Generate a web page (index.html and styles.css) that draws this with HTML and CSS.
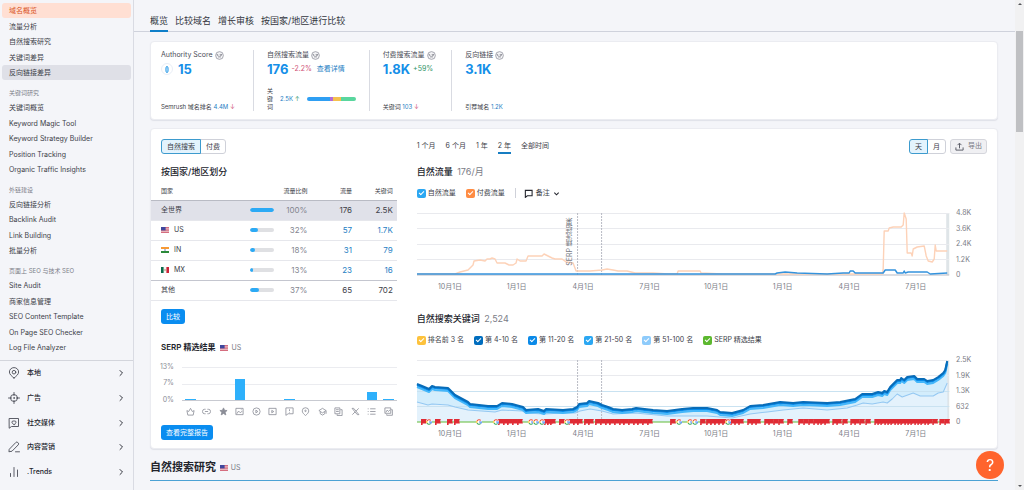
FILE: index.html
```html
<!DOCTYPE html>
<html lang="zh-CN">
<head>
<meta charset="utf-8">
<meta name="viewport" content="width=device-width, initial-scale=1">
<title>域名概览</title>
<link rel="stylesheet" href="styles.css">
</head>
<body>
<svg class="sprite" aria-hidden="true">
  <symbol id="us" viewBox="0 0 8 6"><path fill="#f3d9dc" d="M0 0h8v6H0z"/><path stroke="#c8445a" stroke-width=".8" d="M0 .4h8M0 2.1h8M0 3.8h8M0 5.6h8"/><path fill="#3f479d" d="M0 0h4.6v3.4H0z"/></symbol>
  <symbol id="in" viewBox="0 0 8 6"><path fill="#fff" d="M0 0h8v6H0z"/><path fill="#f79a35" d="M0 0h8v2H0z"/><path fill="#2c8a3a" d="M0 4h8v2H0z"/><circle cx="4" cy="3" r=".8" fill="#5a62b5"/></symbol>
  <symbol id="mx" viewBox="0 0 8 6"><path fill="#f6f6f4" d="M0 0h8v6H0z"/><path fill="#0b6b4b" d="M0 0h2.6v6H0z"/><path fill="#cc2438" d="M5.4 0H8v6H5.4z"/><circle cx="4" cy="3" r=".8" fill="#a8825a"/></symbol>
  <symbol id="info" viewBox="0 0 10 10"><circle cx="5" cy="5" r="4.300" fill="#f4f4f6" stroke="#8a8c96" stroke-width=".8"/><path fill="none" stroke="#7a7c86" stroke-width=".9" d="M2.500 3.300v1.500h1.300M5.800 3.300v1.500h1.500V3.300M3.400 6.500h3.200"/></symbol>
  <symbol id="chev" viewBox="0 0 8 8"><path fill="none" stroke="currentColor" stroke-width="1" stroke-linecap="round" stroke-linejoin="round" d="M3 1.500 5.500 4 3 6.500"/></symbol>
  <symbol id="flag" viewBox="0 0 6 6"><path fill="#e02b34" d="M0 0h5.800L5.200 2l.6 2.600H1.600V6H0z"/></symbol>
  <symbol id="goog" viewBox="0 0 6 6"><circle cx="3" cy="3" r="3" fill="#fff"/><g fill="none" stroke-width="1"><path stroke="#ea4335" d="M4.800 1.400A2.300 2.300 0 0 0 1 2"/><path stroke="#fbbc05" d="M1 2a2.300 2.300 0 0 0 0 2"/><path stroke="#34a853" d="M1 4a2.300 2.300 0 0 0 3.600.7"/><path stroke="#4285f4" d="M4.600 4.700A2.300 2.300 0 0 0 5.300 3H3"/></g></symbol>
</svg>

<div class="app">
  <nav class="sidebar" aria-label="SEO">
    <ul class="links">
      <li><a class="link link-current" href="#">域名概览</a></li>
      <li><a class="link" href="#">流量分析</a></li>
      <li><a class="link" href="#">自然搜索研究</a></li>
      <li><a class="link" href="#">关键词差异</a></li>
      <li><a class="link link-hover" href="#">反向链接差异</a></li>
    </ul>
    <h2 class="group-title">关键词研究</h2>
    <ul class="links">
      <li><a class="link" href="#">关键词概览</a></li>
      <li><a class="link" href="#">Keyword Magic Tool</a></li>
      <li><a class="link" href="#">Keyword Strategy Builder</a></li>
      <li><a class="link" href="#">Position Tracking</a></li>
      <li><a class="link" href="#">Organic Traffic Insights</a></li>
    </ul>
    <h2 class="group-title">外链建设</h2>
    <ul class="links links-four">
      <li><a class="link" href="#">反向链接分析</a></li>
      <li><a class="link" href="#">Backlink Audit</a></li>
      <li><a class="link" href="#">Link Building</a></li>
      <li><a class="link" href="#">批量分析</a></li>
    </ul>
    <h2 class="group-title">页面上 SEO 与技术 SEO</h2>
    <ul class="links">
      <li><a class="link" href="#">Site Audit</a></li>
      <li><a class="link" href="#">商家信息管理</a></li>
      <li><a class="link" href="#">SEO Content Template</a></li>
      <li><a class="link" href="#">On Page SEO Checker</a></li>
      <li><a class="link" href="#">Log File Analyzer</a></li>
    </ul>
    <ul class="sections">
      <li><a class="section-link" href="#"><svg class="section-icon" viewBox="0 0 12 12"><path d="M6 11C3.500 9 1.400 7.300 1.400 5a4.600 4.400 0 0 1 9.200 0C10.600 7.300 8.500 9 6 11z"/><circle cx="6" cy="5.200" r="1.800"/></svg><span>本地</span><svg class="chev"><use href="#chev"/></svg></a></li>
      <li><a class="section-link" href="#"><svg class="section-icon" viewBox="0 0 12 12"><circle cx="6" cy="6" r="3.500"/><circle cx="6" cy="6" r=".4"/><path d="M6 .5v3M6 8.500v3M.5 6h3M8.500 6h3"/></svg><span>广告</span><svg class="chev"><use href="#chev"/></svg></a></li>
      <li><a class="section-link" href="#"><svg class="section-icon" viewBox="0 0 12 12"><path d="M1.500 1.500h9v8h-7l-2 1.500z"/><path d="M6 7.800 4.300 6a1.200 1.200 0 0 1 1.700-1.700A1.200 1.200 0 0 1 7.700 6z"/></svg><span>社交媒体</span><svg class="chev"><use href="#chev"/></svg></a></li>
      <li><a class="section-link" href="#"><svg class="section-icon" viewBox="0 0 12 12"><path d="M1.500 8 7.800 1.500a1.400 1.400 0 0 1 2 0l.4.4a1.400 1.400 0 0 1 0 2L4 10.200l-2.700.5zM7.500 10.800h4"/></svg><span>内容营销</span><svg class="chev"><use href="#chev"/></svg></a></li>
      <li><a class="section-link" href="#"><svg class="section-icon" viewBox="0 0 12 12"><path d="M2.500 7.500v3M6 1.500v9M9.500 4v6.500"/></svg><span>.Trends</span><svg class="chev"><use href="#chev"/></svg></a></li>
    </ul>
  </nav>

  <main class="main">
    <nav class="tabs" aria-label="报告">
      <a class="tab tab-active" href="#">概览</a>
      <a class="tab" href="#">比较域名</a>
      <a class="tab" href="#">增长审核</a>
      <a class="tab" href="#">按国家/地区进行比较</a>
    </nav>

    <div class="content">
      <section class="card metrics">
        <div class="metric">
          <h3 class="metric-title">Authority Score <svg class="info"><use href="#info"/></svg></h3>
          <p class="metric-value"><svg class="gauge" viewBox="0 0 12 12"><circle cx="6" cy="6" r="5.500" fill="#fff" stroke="#e0e6f2" stroke-width=".7"/><ellipse cx="6" cy="6.500" rx="1.300" ry="3.300" fill="#9bd4fb" stroke="#2895e0" stroke-width=".7"/></svg><strong class="big">15</strong></p>
          <p class="metric-foot">Semrush 域名排名 <a href="#">4.4M</a> <span class="down">↓</span></p>
        </div>
        <div class="metric">
          <h3 class="metric-title">自然搜索流量 <svg class="info"><use href="#info"/></svg></h3>
          <p class="metric-value"><strong class="big">176</strong><span class="down">-2.2%</span><a class="details" href="#">查看详情</a></p>
          <div class="metric-foot keywords">
            <span class="keywords-label">关键词</span><span><a href="#">2.5K</a> <span class="up">↑</span></span>
            <span class="split"><i class="split-a"></i><i class="split-b"></i><i class="split-c"></i><i class="split-d"></i></span>
          </div>
        </div>
        <div class="metric">
          <h3 class="metric-title">付费搜索流量 <svg class="info"><use href="#info"/></svg></h3>
          <p class="metric-value"><strong class="big">1.8K</strong><span class="up">+59%</span></p>
          <p class="metric-foot">关键词 <a href="#">103</a> <span class="down">↓</span></p>
        </div>
        <div class="metric">
          <h3 class="metric-title">反向链接 <svg class="info"><use href="#info"/></svg></h3>
          <p class="metric-value"><strong class="big">3.1K</strong></p>
          <p class="metric-foot">引荐域名 <a href="#">1.2K</a></p>
        </div>
      </section>

      <section class="card report">
        <div class="left">
          <div class="toolbar inset">
            <div class="pills"><button class="pill pill-on" type="button">自然搜索</button><button class="pill" type="button">付费</button></div>
          </div>
          <h3 class="title inset">按国家/地区划分</h3>
          <table class="countries">
            <thead><tr><th class="c-name">国家</th><th class="c-bar"></th><th class="c-share">流量比例</th><th class="c-num">流量</th><th class="c-num">关键词</th></tr></thead>
            <tbody>
              <tr class="row-all"><td>全世界</td><td><div class="bar"><i style="width:100%"></i></div></td><td class="share">100%</td><td>176</td><td>2.5K</td></tr>
              <tr><td><svg class="flag"><use href="#us"/></svg>US</td><td><div class="bar"><i style="width:32%"></i></div></td><td class="share">32%</td><td><a href="#">57</a></td><td><a href="#">1.7K</a></td></tr>
              <tr><td><svg class="flag"><use href="#in"/></svg>IN</td><td><div class="bar"><i style="width:18%"></i></div></td><td class="share">18%</td><td><a href="#">31</a></td><td><a href="#">79</a></td></tr>
              <tr class="row-last"><td><svg class="flag"><use href="#mx"/></svg>MX</td><td><div class="bar"><i style="width:13%"></i></div></td><td class="share">13%</td><td><a href="#">23</a></td><td><a href="#">16</a></td></tr>
              <tr><td>其他</td><td><div class="bar"><i style="width:37%"></i></div></td><td class="share">37%</td><td>65</td><td>702</td></tr>
            </tbody>
          </table>
          <div class="inset action"><button class="primary" type="button">比较</button></div>
          <h3 class="title title-serp inset">SERP 精选结果 <span class="geo"><svg class="flag"><use href="#us"/></svg>US</span></h3>
          <div class="serp inset">
            <div class="serp-axis"><span>13%</span><span>7%</span><span>0%</span></div>
            <div class="serp-body">
              <div class="serp-plot">
                <i style="height:3%"></i><i style="height:0%"></i><i style="height:0%"></i><i style="height:61%"></i><i style="height:0%"></i><i style="height:0%"></i><i style="height:3%"></i><i style="height:0%"></i><i style="height:0%"></i><i style="height:0%"></i><i style="height:0%"></i><i style="height:22%"></i><i style="height:3%"></i>
              </div>
              <div class="serp-icons">
                <svg viewBox="0 0 10 10"><path d="M1 4l2 1 2-3.500L7 5l2-1-1 5H2z"/></svg>
                <svg viewBox="0 0 10 10"><path d="M4 7.500H3a2.500 2.500 0 0 1 0-5h1M6 2.500h1a2.500 2.500 0 0 1 0 5H6M3.200 5h3.600"/></svg>
                <svg class="solid" viewBox="0 0 10 10"><path d="M5 1l1.200 2.700 2.800.2-2.200 1.900.8 3L5 7.200 2.400 8.800l.8-3L1 3.900l2.800-.2z"/></svg>
                <svg viewBox="0 0 10 10"><path d="M1 1.500h8v7H1zM2 7.500l2-3 2 2 2-2M6.500 3h.8"/></svg>
                <svg viewBox="0 0 10 10"><circle cx="5" cy="5" r="4"/><path d="M4.300 3.500v3L6.500 5z"/></svg>
                <svg viewBox="0 0 10 10"><path d="M1 1.500h8v7H1zM4.200 3.800v2.600L6.400 5z"/></svg>
                <svg viewBox="0 0 10 10"><path d="M1 1h8v6.500H3.500L1 9.300zM5 2.500v2M5 5.500v.7"/></svg>
                <svg viewBox="0 0 10 10"><path d="M5 9.500C2.800 7.600 1.400 6.200 1.400 4.300a3.600 3.500 0 0 1 7.200 0C8.600 6.200 7.200 7.600 5 9.500z"/><circle cx="5" cy="4.300" r=".8"/></svg>
                <svg viewBox="0 0 10 10"><path d="M5 1.500l4 2.500-4 2.500L1 4zM2.500 5.500v2L5 9l2.500-1.500v-2M9 4v3.500"/></svg>
                <svg viewBox="0 0 10 10"><path d="M1 1h5.500v6.500H1zM7 3h2v6.500H3.500V8M2.300 3h3M2.300 5h3"/></svg>
                <svg viewBox="0 0 10 10"><path d="M1.200 1.500h1.800l5.800 7H7zM8.500 1.500l-3 3.200M4.500 5.500l-3 3"/></svg>
                <svg viewBox="0 0 10 10"><path d="M3.500 2H9.500M3.500 5H9.500M3.500 8H9.500M.8 2h1M.8 5h1M.8 8h1"/></svg>
                <svg viewBox="0 0 10 10"><path d="M1 1h6.500v6H1zM8 3h1.300v6.200H3V8M2 6l1.500-2.500L5 5l1.700-2"/></svg>
              </div>
            </div>
          </div>
          <div class="inset action-full"><button class="primary" type="button">查看完整报告</button></div>
        </div>

        <div class="right">
          <div class="toolbar">
            <div class="periods">
              <button class="period" type="button">1 个月</button><button class="period" type="button">6 个月</button><button class="period" type="button">1 年</button><button class="period period-on" type="button">2 年</button><button class="period" type="button">全部时间</button>
            </div>
            <div class="tools">
              <div class="pills"><button class="pill pill-on" type="button">天</button><button class="pill" type="button">月</button></div>
              <button class="export" type="button"><svg viewBox="0 0 10 10"><path d="M5 7V1.500M2.800 3.500 5 1.300l2.200 2.200M1 6v3h8V6"/></svg>导出</button>
            </div>
          </div>
          <h3 class="title">自然流量 <span class="amount">176/月</span></h3>
          <div class="legend">
            <label class="check"><input class="sky" type="checkbox" checked>自然流量</label>
            <label class="check"><input class="orange" type="checkbox" checked>付费流量</label>
            <button class="notes" type="button"><svg viewBox="0 0 10 10"><path d="M1.500 1.500h7.500v6H3.700L1.500 9.300z"/></svg>备注<svg class="caret" viewBox="0 0 8 8"><path d="M1.500 3 4 5.500 6.500 3"/></svg></button>
          </div>
          <div class="chart">
            <div class="plot">
              <svg class="canvas" viewBox="0 0 532 62" preserveAspectRatio="none">
                <path class="band" d="M529 0h3v62h-3z"/>
                <path class="grid" d="M0 .5H532M0 15.500H532M0 31.500H532M0 46.500H532"/><path class="base" d="M0 62H532"/>
                <path class="dash" d="M160.500 0V62M184.500 0V62"/>
                <path class="line paid" d="M0 61H38L43 59 51 57 56 52 57 48 63 47 68 48 70 46 73 46 75 45 78 46 80 50H88L92 52H96L99 50 100 46 103 48H109L111 43H125L127 41 131 43 135 45 138 46H145L149 49 156 50 159 58H173L185 57 190 56 196 57 201 58H210L218 60H236L251 61H260L261 58H283L284 60 305 61H465L466 56 467 18H471L472 15 476 14H484L486 12 487 0 489 6 490 40H494L495 43 496 36 500 34 507 33 509 43 511 48 515 49 517 46 518 32 519 38H530"/>
                <path class="line organic" d="M0 61H326L340 61 358 61 360 60 368 59 380 60 410 61 426 60H432L433 58H436L438 60H466L468 57H478L480 60H486L487 58 488 60 491 59H510L513 61 530 60"/>
              </svg>
              <span class="plot-note">SERP 精选结果</span>
            </div>
            <div class="y-axis"><span>4.8K</span><span>3.6K</span><span>2.4K</span><span>1.2K</span><span>0</span></div>
            <div class="x-axis"><span>10月1日</span><span>1月1日</span><span>4月1日</span><span>7月1日</span><span>10月1日</span><span>1月1日</span><span>4月1日</span><span>7月1日</span></div>
          </div>
          <h3 class="title title-keywords">自然搜索关键词 <span class="amount">2,524</span></h3>
          <div class="legend">
            <label class="check"><input class="yellow" type="checkbox" checked>排名前 3 名</label>
            <label class="check"><input class="navy" type="checkbox" checked>第 4-10 名</label>
            <label class="check"><input class="blue" type="checkbox" checked>第 11-20 名</label>
            <label class="check"><input class="sky" type="checkbox" checked>第 21-50 名</label>
            <label class="check"><input class="pale" type="checkbox" checked>第 51-100 名</label>
            <label class="check"><input class="green" type="checkbox" checked>SERP 精选结果</label>
          </div>
          <div class="chart">
            <div class="plot">
              <svg class="canvas" viewBox="0 0 532 62" preserveAspectRatio="none">
                <path class="band" d="M529 0h3v62h-3z"/>
                <path class="grid" d="M0 .5H532M0 15.500H532M0 31.500H532M0 46.500H532"/>
                <path id="total" class="area" d=""/>
                <path id="lower" class="area-low" d=""/>
                <path class="grid grid-over" d="M0 31.500H532M0 46.500H532"/>
                <path class="dash" d="M160.500 0V62M184.500 0V62"/>
                <path id="line-low" class="line pale-line" d=""/>
                <path id="line-sky" class="line sky-line" d=""/>
                <path id="line-blue" class="line blue-line" d=""/>
                <path id="line-navy" class="line navy-line" d=""/>
                <path class="line green-line" d="M0 62H530"/>
                <g id="markers"></g>
              </svg>
            </div>
            <div class="y-axis"><span>2.5K</span><span>1.9K</span><span>1.3K</span><span>632</span><span>0</span></div>
            <div class="x-axis"><span>10月1日</span><span>1月1日</span><span>4月1日</span><span>7月1日</span><span>10月1日</span><span>1月1日</span><span>4月1日</span><span>7月1日</span></div>
          </div>
        </div>
      </section>

      <h2 class="page-section">自然搜索研究 <span class="geo"><svg class="flag"><use href="#us"/></svg>US</span></h2>
    </div>
  </main>

  <div class="scroll" aria-hidden="true"><i class="arrow-up"></i><i class="thumb"></i><i class="arrow-down"></i></div>
</div>
<button class="help" type="button" aria-label="帮助">?</button>
<script src="chart.js"></script>
</body>
</html>
```
FILE: styles.css
```css
* { box-sizing: border-box; }
body { margin: 0; background: #f4f5f9; color: #3c3e48; font: 7px/10px Inter, "Noto Sans CJK SC", sans-serif; }
h2, h3, p, ul { margin: 0; padding: 0; font-weight: 400; }
ul { list-style: none; }
a { color: #2680c4; text-decoration: none; }
button { font: inherit; color: inherit; cursor: pointer; }
.sprite { position: absolute; width: 0; height: 0; }
.app { display: flex; min-height: 100vh; }

.sidebar { flex: none; width: 134px; padding-top: 3px; border-right: 1px solid #d9dbe3; }
.links { display: flex; flex-direction: column; justify-content: space-between; min-height: 77px; padding: 0 2px; }
.links-four { min-height: 61px; }
.link { display: block; padding: 0 7px; border-radius: 3px; line-height: 15px; font-size: 7px; color: #3c3e48; }
.link-current { background: #ffdfd3; color: #d9541f; }
.link-hover { background: #dfe0e7; }
.group-title { margin-top: 6px; padding-left: 9px; font-size: 6px; line-height: 14px; color: #7d7f89; }
.sections { display: flex; flex-direction: column; justify-content: space-between; min-height: 129px; margin-top: 5px; padding-bottom: 5px; border-top: 1px solid #d3d5dc; }
.section-link { display: flex; align-items: center; gap: 7px; height: 24px; padding: 0 8px; color: #22242c; font-weight: 500; }
.section-icon { width: 12px; height: 12px; fill: none; stroke: #4b4d57; stroke-width: .9; stroke-linecap: round; }
.chev { width: 8px; height: 8px; margin-left: auto; color: #33353e; }

.main { flex: 1; min-width: 0; }
.tabs { display: flex; gap: 7px; padding: 10px 16px 0; border-bottom: 1px solid #cfd2dc; }
.tab { font-size: 9px; line-height: 21px; color: #33353e; }
.tab-active { box-shadow: 0 1px 0 #0f7fc9, inset 0 -1px 0 #0f7fc9; }
.content { padding: 9px 17px 0 16px; }
.card { background: #fff; border: 1px solid #ebecf1; border-radius: 4px; box-shadow: 0 1px 1px #dfe1e8; }

.metrics { display: grid; grid-template-columns: 93px 14% 10% 1fr; padding: 8px 10px; }
.metric { display: flex; flex-direction: column; min-height: 61px; padding: 0 13px; border-right: 1px solid #d9dbe2; }
.metric:first-child { padding-left: 0; padding-right: 0; }
.metric:last-child { border: 0; }
.metric-title { display: flex; align-items: center; gap: 2px; font-size: 7px; line-height: 10px; color: #4a4c56; white-space: nowrap; }
.info { width: 9px; height: 9px; }
.metric-value { display: flex; align-items: center; gap: 3px; line-height: 18px; white-space: nowrap; font-size: 7px; }
.gauge { width: 12px; height: 12px; margin-right: 2px; }
.big { font-size: 13px; font-weight: 700; color: #158fe8; }
.details { margin-left: 2px; }
.down { color: #cf5276; }
.up { color: #2f9468; }
.metric-foot { margin-top: auto; font-size: 6px; line-height: 8px; white-space: nowrap; }
.keywords { display: flex; align-items: center; gap: 7px; }
.keywords-label { width: 6px; white-space: normal; }
.split { display: flex; flex: 1; height: 4px; max-width: 51px; border-radius: 2px; overflow: hidden; }
.split-a { flex: 24; background: #2f9ff3; }
.split-b { flex: 3; background: #b36bd6; }
.split-c { flex: 9; background: #f5c04d; }
.split-d { flex: 15; background: #59d69e; }

.report { display: grid; grid-template-columns: 29.4% minmax(0, 1fr); margin-top: 8px; padding: 9px 10px 8px 0; }
.left { min-width: 0; }
.inset { padding-left: 10px; }
.right { min-width: 0; padding-left: 20px; }
.toolbar { display: flex; justify-content: space-between; align-items: center; min-height: 16px; }
.pills { display: flex; }
.pill { height: 15px; padding: 0 5px; border: 1px solid #cfd1d9; background: #fff; line-height: 13px; border-radius: 0 3px 3px 0; margin-left: -1px; }
.pill-on { position: relative; margin: 0; border-color: #3d9bce; background: #e3f3fd; border-radius: 3px 0 0 3px; }
.title { margin-top: 11px; font-size: 9px; line-height: 13px; font-weight: 500; color: #22242c; white-space: nowrap; }
.amount { margin-left: 2px; font-weight: 400; color: #7a7c86; }

.countries { width: 100%; margin-top: 5px; border-collapse: collapse; table-layout: fixed; font-size: 8px; }
.countries th { height: 17px; padding: 0; font-size: 6px; font-weight: 400; text-align: right; border-bottom: 1px solid #b9bbc4; }
.countries td { height: 20px; padding: 0; text-align: right; border-bottom: 1px solid #e6e7ec; line-height: 10px; }
.countries tr > :first-child { padding-left: 10px; text-align: left; }
.countries td:first-child { font-size: 7px; }
.countries tr > :last-child { padding-right: 4px; }
.countries .row-last td { border-color: #c4c6cf; }
.c-name { width: 40%; }
.c-bar { width: 11%; }
.c-share { width: 12%; }
.c-num { width: 18%; }
.row-all td { background: #e0e1e9; }
.countries .share { color: #83858f; }
.bar { height: 4px; margin-right: 4px; border-radius: 2px; background: #dfe0e3; overflow: hidden; }
.bar i { display: block; height: 4px; border-radius: 2px; background: #2caaf5; }
.flag { width: 8px; height: 6px; margin-right: 5px; vertical-align: -1px; }
.action { margin-top: 8px; }
.primary { display: block; height: 15px; padding: 0 5px; border: 0; border-radius: 3px; background: #0a8df0; color: #fff; line-height: 15px; }
.title-serp { margin-top: 17px; font-weight: 600; font-size: 8px; }
.geo { margin-left: 3px; font-size: 7px; font-weight: 400; color: #7a7c86; }
.geo .flag { margin-right: 3px; }
.serp { display: grid; grid-template-columns: 21px 1fr; margin-top: 13px; }
.serp-axis { display: flex; flex-direction: column; justify-content: space-between; align-items: flex-end; height: 43px; margin-top: -5px; padding-right: 8px; color: #8a8c96; }
.serp-plot { display: grid; grid-template-columns: repeat(13, 1fr); align-items: end; height: 34px; border-bottom: 1px solid #c8cad1; background: linear-gradient(#ebecf0, #ebecf0) 0 0 / 100% 1px no-repeat, linear-gradient(#ebecf0, #ebecf0) 0 17px / 100% 1px no-repeat; }
.serp-plot i { margin: 0 3px; background: #2eb0fb; }
.serp-icons { display: grid; grid-template-columns: repeat(13, 1fr); justify-items: center; margin-top: 6px; }
.serp-icons svg { width: 9px; height: 9px; fill: none; stroke: #8b8d97; stroke-width: .9; }
.serp-icons .solid { fill: #8b8d97; }
.action-full { margin-top: 9px; }

.periods { display: flex; gap: 10px; }
.period { padding: 0; border: 0; border-bottom: 2px solid transparent; background: none; line-height: 13px; }
.period-on { border-color: #167dc2; }
.tools { display: flex; gap: 4px; }
.export { display: flex; align-items: center; gap: 4px; height: 15px; padding: 0 4px; border: 1px solid #d5d6dc; border-radius: 3px; background: #f0f0f3; color: #777983; }
.export svg { width: 9px; height: 9px; fill: none; stroke: #5d5f69; stroke-width: 1.1; }
.legend { display: flex; align-items: center; flex-wrap: wrap; gap: 10px; min-height: 12px; margin-top: 9px; }
.check { display: flex; align-items: center; gap: 2px; white-space: nowrap; }
.check input { appearance: none; display: grid; place-items: center; width: 9px; height: 9px; margin: 0; border-radius: 2px; }
.check input::after { content: ""; width: 4px; height: 2px; margin-bottom: 1px; border: solid #fff; border-width: 0 0 1px 1px; transform: rotate(-45deg); }
.sky { background: #2ba7f2; }
.orange { background: #ff8c43; }
.yellow { background: #fdc23c; }
.navy { background: #006dbe; }
.blue { background: #0b8ae8; }
.pale { background: #8ecbfb; }
.green { background: #5cb82f; }
.notes { display: flex; align-items: center; gap: 3px; padding: 0 0 0 8px; border: 0; border-left: 1px solid #cfd1d9; background: none; }
.notes svg { width: 9px; height: 9px; fill: none; stroke: #22242c; stroke-width: 1.2; }
.notes .caret { width: 7px; height: 7px; }

.chart { display: grid; grid-template-columns: minmax(0, 1fr) 38px; margin-top: 14px; font-size: 7px; color: #7a7c86; }
.plot { position: relative; height: 62px; }
.canvas { display: block; width: 100%; height: 62px; overflow: visible; }
.y-axis { display: flex; flex-direction: column; justify-content: space-between; height: 72px; margin: -5px 0; padding-left: 7px; }
.x-axis { display: grid; grid-template-columns: repeat(8, 1fr); margin: 7px 0 0; text-align: center; }
.plot-note { position: absolute; left: 28%; top: 5px; line-height: 8px; font-size: 7px; writing-mode: vertical-rl; transform: rotate(180deg); white-space: nowrap; }
.grid { fill: none; stroke: #e9eaee; }
.grid-over { stroke: #c9e2f1; }
.base { stroke: #b8bac3; }
.band { fill: #dfe5e8; }
.dash { stroke: #b9bbc4; stroke-dasharray: 2 1; }
.line { fill: none; stroke-linejoin: round; }
.paid { stroke: #fdd2b8; stroke-width: 1.4; }
.organic { stroke: #3493dd; stroke-width: 1.5; }
.area { fill: #d3edfc; }
.area-low { fill: #e4f2fc; }
.pale-line { stroke: #94c8f2; }
.sky-line { stroke: #45b7fa; stroke-width: 2; }
.blue-line { stroke: #078cec; stroke-width: 2; }
.navy-line { stroke: #086cb8; stroke-width: 2; }
.green-line { stroke: #62bb37; }
.title-keywords { margin-top: 20px; }

.page-section { margin-top: 10px; padding-bottom: 4px; border-bottom: 1px solid #4aa1d4; font-size: 11px; line-height: 17px; font-weight: 600; color: #22242c; }
.page-section .geo { vertical-align: 1px; margin-left: 1px; }

.scroll { display: flex; flex: none; flex-direction: column; align-items: center; width: 9px; padding: 3px 0; background: #f1f1f2; }
.arrow-up, .arrow-down { border: 2px solid transparent; }
.arrow-up { border-top-width: 0; border-bottom-color: #55565a; }
.arrow-down { margin-top: auto; border-bottom-width: 0; border-top-color: #55565a; }
.thumb { width: 7px; height: 101px; margin-top: 26px; background: #bfc0c3; }
.help { position: fixed; right: 20px; bottom: 11px; width: 28px; height: 28px; padding: 0; border: 0; border-radius: 50%; background: #ff642d; color: #fff; font-size: 16px; line-height: 28px; }
```
FILE: chart.js
```js
const total = [[0,23],[5,25],[12,28],[15,25],[18,26],[31,27],[38,34],[51,41],[53,43],[71,45],[80,45],[85,42],[95,43],[106,46],[109,49],[121,48],[127,50],[129,48],[146,49],[156,48],[160,46],[162,43],[170,42],[172,40],[181,42],[185,44],[191,46],[196,48],[205,49],[215,48],[219,47],[236,49],[250,50],[265,48],[276,47],[290,47],[300,49],[303,51],[315,52],[326,49],[333,45],[346,44],[363,41],[376,42],[386,41],[410,42],[423,41],[438,38],[445,33],[455,33],[461,31],[465,32],[467,30],[470,31],[473,26],[478,21],[480,19],[483,19],[484,17],[487,19],[490,16],[497,15],[500,18],[507,18],[510,20],[516,19],[521,16],[526,12],[528,9],[530,0]];
const lower = [[0,42],[11,45],[15,44],[31,45],[38,47],[51,50],[78,52],[85,50],[105,51],[110,53],[127,54],[146,53],[158,53],[163,51],[173,49],[185,51],[196,54],[218,53],[250,56],[290,56],[315,58],[333,54],[350,52],[366,50],[386,48],[410,50],[430,48],[440,45],[446,43],[455,44],[466,42],[470,43],[475,39],[480,34],[485,37],[496,33],[503,36],[516,36],[521,33],[526,32],[530,23]];
const flags = [7,21,33,40,84,89,93,98,103,130,133,136,145,154,159,163,170,174,181,186,191,195,200,205,209,214,219,223,228,233,256,286,292,296,300,304,308,316,320,324,333,337,341,350,354,359,364,373,384,389,394,399,403,406,410,418,422,428,436,440,445,451,460,463,466,470,473,476,480,483,486,490,493,496,500,503,506,510,513,518,525,530];
const googles = [12,62,79,114,119,125,150,262,273,278,311];

const trace = (points, dy) => "M" + points.map(([x, y]) => `${x} ${y + dy}`).join("L");
const draw = (id, d) => document.getElementById(id).setAttribute("d", d);
draw("total", trace(total, 1) + "V62H0Z");
draw("lower", trace(lower, 0) + "V62H0Z");
draw("line-low", trace(lower, 0));
draw("line-sky", trace(total, 4));
draw("line-blue", trace(total, 2));
draw("line-navy", trace(total, 1));

const layer = document.getElementById("markers");
const place = (symbol, x) => {
  const mark = document.createElementNS("http://www.w3.org/2000/svg", "use");
  mark.setAttribute("href", symbol);
  mark.setAttribute("x", x - 3);
  mark.setAttribute("y", 59);
  mark.setAttribute("width", 6);
  mark.setAttribute("height", 6);
  layer.append(mark);
};
flags.forEach((x) => place("#flag", x));
googles.forEach((x) => place("#goog", x));
```
